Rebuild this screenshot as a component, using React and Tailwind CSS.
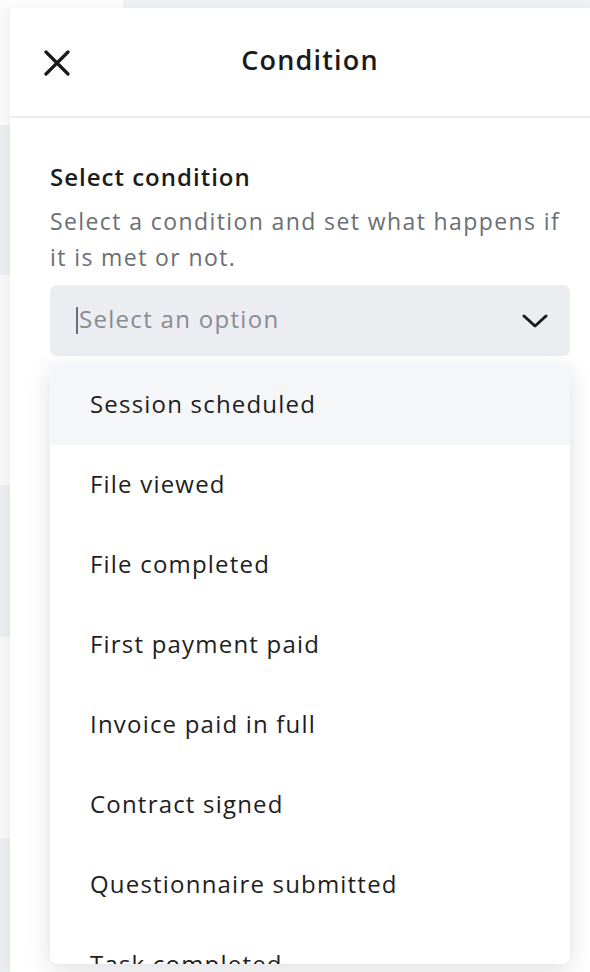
import React from 'react';

const options = [
  'Session scheduled',
  'File viewed',
  'File completed',
  'First payment paid',
  'Invoice paid in full',
  'Contract signed',
  'Questionnaire submitted',
  'Task completed',
];

function CloseIcon() {
  return (
    <svg width="26" height="26" viewBox="0 0 26 26" fill="none">
      <path d="M2 2L24 24M24 2L2 24" stroke="#1a1a1a" strokeWidth="3.2" strokeLinecap="round" />
    </svg>
  );
}

function Chevron() {
  return (
    <svg width="26" height="16" viewBox="0 0 26 16" fill="none">
      <path d="M2 3L13 13L24 3" stroke="#1a1a1a" strokeWidth="3" strokeLinecap="round" strokeLinejoin="round" />
    </svg>
  );
}

export default function App() {
  return (
    <div
      className="h-[972px] w-[590px] overflow-hidden bg-[#eef0f3] flex flex-col"
      style={{ fontFamily: '"Open Sans", "Liberation Sans", sans-serif' }}
    >
      <div className="h-[8px] flex shrink-0">
        <div className="w-[123px] bg-[#fdfdfe]" />
      </div>
      <div className="flex flex-1 min-h-0">
        {/* page behind the drawer */}
        <div className="w-[10px] flex flex-col shrink-0">
          <div className="h-[117px] bg-[#fafafc]" />
          <div className="h-[150px] bg-[#eceef2]" />
          <div className="h-[210px] bg-[#f8f8fa]" />
          <div className="h-[152px] bg-[#eceef2]" />
          <div className="h-[201px] bg-[#f8f8fa]" />
          <div className="flex-1 bg-[#eceef2]" />
        </div>

        {/* drawer */}
        <div className="flex-1 bg-white flex flex-col shadow-[-4px_0_12px_rgba(0,0,0,0.04)]">
          <div className="h-[110px] border-b-2 border-[#ededef] flex items-center relative shrink-0 pl-[20px]">
            <div className="absolute left-[34px] top-[42px]">
              <CloseIcon />
            </div>
            <h1 className="w-full text-center text-[27px] font-semibold text-[#1a1a1a] tracking-[1.2px] -mt-[4px]">
              Condition
            </h1>
          </div>

          <div className="pl-[40px] pr-[20px] pt-[44px] flex flex-col">
            <div className="text-[24px] font-semibold text-[#1c1c1c] leading-[30px] tracking-[1px]">Select condition</div>
            <p className="mt-[11px] text-[23px] leading-[36px] text-[#6b6e75] tracking-[1.4px]">
              Select a condition and set what happens if it is met or not.
            </p>
            <div className="mt-[10px] h-[71px] rounded-[7px] bg-[#ecedf0] flex items-center pl-[26px] pr-[22px]">
              <span className="w-[2px] h-[27px] bg-[#6b6e75] mr-[1px]" />
              <span className="flex-1 text-[24px] text-[#878b94] tracking-[1.3px] -mt-[3px]">Select an option</span>
              <Chevron />
            </div>

            <div className="mt-[9px] h-[599px] rounded-b-[8px] bg-white overflow-hidden shadow-[0_6px_24px_rgba(20,25,45,0.14)]">
              {options.map((opt, i) => (
                <div
                  key={opt}
                  className={`h-[80px] flex items-center pl-[40px] pb-[3px] text-[24px] tracking-[1.2px] text-[#1e1e1e] ${i === 0 ? 'bg-[#f5f6f8]' : ''}`}
                >
                  {opt}
                </div>
              ))}
            </div>
          </div>
        </div>
      </div>
    </div>
  );
}
